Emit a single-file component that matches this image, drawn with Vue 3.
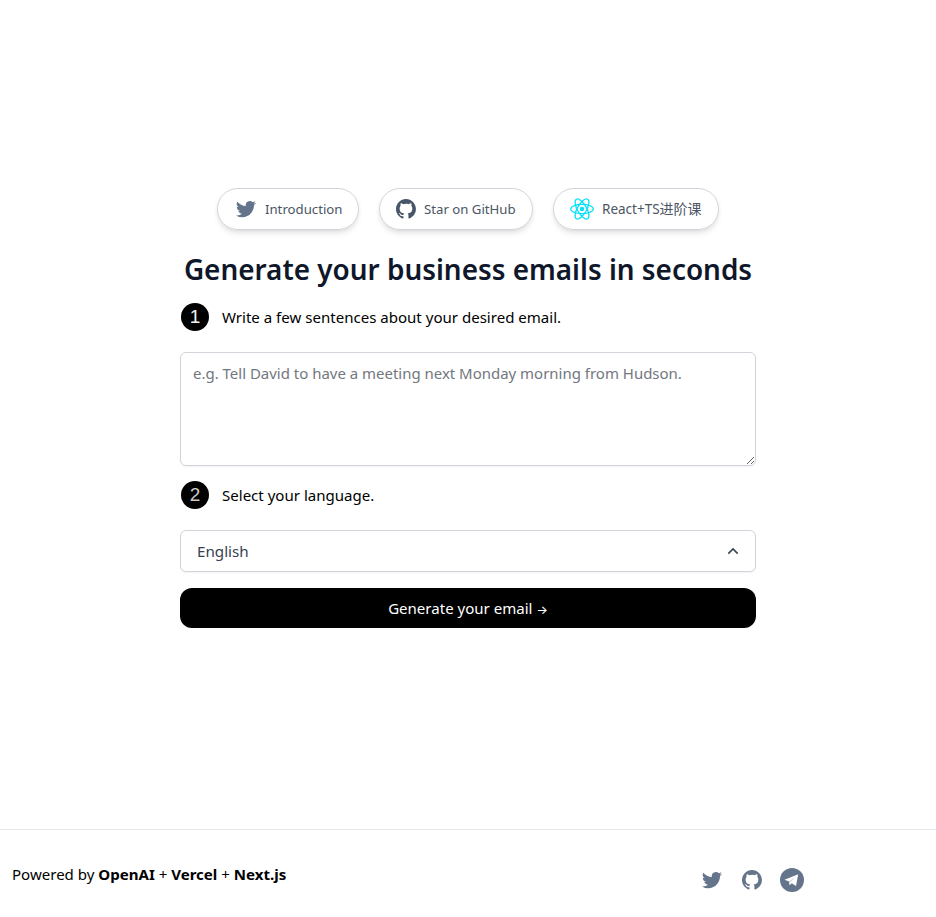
<script setup>
import { ref } from 'vue'

const prompt = ref('')
const twitter =
  'M8.29 20.251c7.547 0 11.675-6.253 11.675-11.675 0-.178 0-.355-.012-.53A8.348 8.348 0 0022 5.92a8.19 8.19 0 01-2.357.646 4.118 4.118 0 001.804-2.27 8.224 8.224 0 01-2.605.996 4.107 4.107 0 00-6.993 3.743 11.65 11.65 0 01-8.457-4.287 4.106 4.106 0 001.27 5.477A4.072 4.072 0 012.8 9.713v.052a4.105 4.105 0 003.292 4.022 4.095 4.095 0 01-1.853.07 4.108 4.108 0 003.834 2.85A8.233 8.233 0 012 18.407a11.616 11.616 0 006.29 1.84'
const github =
  'M48.854 0C21.839 0 0 22 0 49.217c0 21.756 13.993 40.172 33.405 46.69 2.427.49 3.316-1.059 3.316-2.362 0-1.141-.08-5.052-.08-9.127-13.59 2.934-16.42-5.867-16.42-5.867-2.184-5.704-5.42-7.17-5.42-7.17-4.448-3.015.324-3.015.324-3.015 4.934.326 7.523 5.052 7.523 5.052 4.367 7.496 11.404 5.378 14.235 4.074.404-3.178 1.699-5.378 3.074-6.6-10.839-1.141-22.243-5.378-22.243-24.283 0-5.378 1.94-9.778 5.014-13.2-.485-1.222-2.184-6.275.486-13.038 0 0 4.125-1.304 13.426 5.052a46.97 46.97 0 0 1 12.214-1.63c4.125 0 8.33.571 12.213 1.63 9.302-6.356 13.427-5.052 13.427-5.052 2.67 6.763.97 11.816.485 13.038 3.155 3.422 5.015 7.822 5.015 13.2 0 18.905-11.404 23.06-22.324 24.283 1.78 1.548 3.316 4.481 3.316 9.126 0 6.6-.08 11.897-.08 13.526 0 1.304.89 2.853 3.316 2.364 19.412-6.52 33.405-24.935 33.405-46.691C97.707 22 75.788 0 48.854 0z'
</script>

<template>
  <div class="page">
    <main class="main">
      <nav class="links">
        <a class="pill intro">
          <svg class="icon24 slate" viewBox="0 0 24 24"><path :d="twitter" /></svg>
          <span>Introduction</span>
        </a>
        <a class="pill star">
          <svg class="icon20 dark" viewBox="0 0 98 98"><path :d="github" /></svg>
          <span>Star on GitHub</span>
        </a>
        <a class="pill course">
          <svg class="icon24" viewBox="-12 -12 24 24">
            <circle r="2.2" fill="#00e0f8" />
            <g fill="none" stroke="#00e0f8" stroke-width="1.25">
              <ellipse rx="11.3" ry="4.6" />
              <ellipse rx="11.3" ry="4.6" transform="rotate(60)" />
              <ellipse rx="11.3" ry="4.6" transform="rotate(120)" />
            </g>
          </svg>
          <span><span class="latin">React+TS</span>进阶课</span>
        </a>
      </nav>
      <h1>Generate your business emails in seconds</h1>
      <section class="form">
        <div class="step">
          <span class="badge">1</span>
          <p>Write a few sentences about your desired email.</p>
        </div>
        <textarea v-model="prompt" placeholder="e.g. Tell David to have a meeting next Monday morning from Hudson."></textarea>
        <div class="step second">
          <span class="badge two">2</span>
          <p>Select your language.</p>
        </div>
        <button class="select">
          <span>English</span>
          <svg viewBox="0 0 20 20" class="chevron"><path d="M5.3 12.6 10 7.9l4.7 4.7" /></svg>
        </button>
        <button class="submit">Generate your email <span class="arrow">→</span></button>
      </section>
    </main>
    <footer class="footer">
      <div class="powered">Powered by <b>OpenAI</b> + <b>Vercel</b> + <b>Next.js</b></div>
      <div class="social">
        <svg class="icon24 slate" viewBox="0 0 24 24"><path :d="twitter" /></svg>
        <svg class="icon20 slate" viewBox="0 0 98 98"><path :d="github" /></svg>
        <svg class="icon24" viewBox="0 0 24 24">
          <circle cx="12" cy="12" r="12" fill="#64748b" />
          <path d="M4.5 11.8 18.2 6.2 16 18 11.8 15.2 9.6 17.3 9.1 13.5Z" fill="#fff" />
          <path d="M9.1 13.5 15.8 8.4 10.4 14.2 9.6 17.3Z" fill="#cbd5e1" />
        </svg>
      </div>
    </footer>
  </div>
</template>

<style>
body {
  margin: 0;
  background: #fff;
}
</style>

<style scoped>
* {
  box-sizing: border-box;
}
.page {
  display: flex;
  flex-direction: column;
  height: 917px;
  overflow: hidden;
  font-family: "Noto Sans", "Noto Sans CJK SC", sans-serif;
  font-size: 15.05px;
  font-weight: 400;
  line-height: 24px;
  color: #000;
}
.main {
  flex: 1;
  display: flex;
  flex-direction: column;
  align-items: center;
  padding-top: 188px;
}
.links {
  display: flex;
  gap: 20px;
}
.pill {
  display: flex;
  align-items: center;
  gap: 8px;
  height: 42px;
  padding: 0 16px;
  border: 1px solid #d1d5db;
  border-radius: 21px;
  box-shadow: 0 4px 6px -1px rgb(0 0 0 / 0.1), 0 2px 4px -2px rgb(0 0 0 / 0.1);
  color: #4b5563;
  font-size: 13.2px;
  line-height: 20px;
  white-space: nowrap;
}
.intro {
  width: 142px;
  gap: 7px;
}
.star {
  width: 154px;
}
.course {
  width: 166px;
  font-size: 14px;
}
.latin {
  font-size: 13.5px;
}
svg {
  display: block;
  flex: none;
}
.icon24 {
  width: 24px;
  height: 24px;
}
.icon20 {
  width: 20px;
  height: 20px;
}
.slate {
  fill: #64748b;
}
.dark {
  fill: #475569;
}
h1 {
  margin: 21px 0 0;
  font-size: 27.9px;
  line-height: 36px;
  font-weight: 600;
  color: #0f172a;
  white-space: nowrap;
}
.form {
  display: flex;
  flex-direction: column;
  width: 576px;
  margin-top: 15px;
}
.step {
  display: flex;
  align-items: center;
  gap: 12px;
  height: 30px;
}
.step p {
  margin: 0;
}
.second {
  margin-top: 14px;
}
.badge {
  width: 28px;
  height: 28px;
  margin: 0 1px;
  border-radius: 50%;
  background: #000;
  color: #f5f5f5;
  font: 400 19px/28px "Liberation Sans", sans-serif;
  text-align: center;
}
.two {
  color: #ccc;
}
textarea {
  display: block;
  width: 576px;
  height: 114px;
  margin: 20px 0 0;
  padding: 8px 12px;
  border: 1px solid #d1d5db;
  border-radius: 6px;
  box-shadow: 0 1px 2px rgb(0 0 0 / 0.05);
  background: #fff;
  font: inherit;
  font-size: 14.97px;
  resize: vertical;
}
textarea::placeholder {
  color: #73777e;
}
button {
  font: inherit;
}
.select {
  display: flex;
  align-items: center;
  justify-content: space-between;
  height: 42px;
  margin-top: 20px;
  padding: 0 12px 0 16px;
  border: 1px solid #d1d5db;
  border-radius: 6px;
  box-shadow: 0 1px 2px rgb(0 0 0 / 0.05);
  background: #fff;
  color: #374151;
  font-size: 15.2px;
}
.chevron {
  width: 20px;
  height: 20px;
  fill: none;
  stroke: #374151;
  stroke-width: 1.5;
}
.submit {
  height: 40px;
  margin-top: 16px;
  padding: 0;
  border: 0;
  border-radius: 12px;
  background: #000;
  color: #fff;
}
.arrow {
  font: 500 12px/20px Inter, sans-serif;
}
.footer {
  display: flex;
  justify-content: space-between;
  height: 88px;
  padding: 32px 132px 0 12px;
  border-top: 1px solid #e5e7eb;
}
.powered b {
  font-weight: 700;
}
.social {
  display: flex;
  align-items: center;
  height: 24px;
  gap: 18px;
  margin-top: 6px;
}
</style>
